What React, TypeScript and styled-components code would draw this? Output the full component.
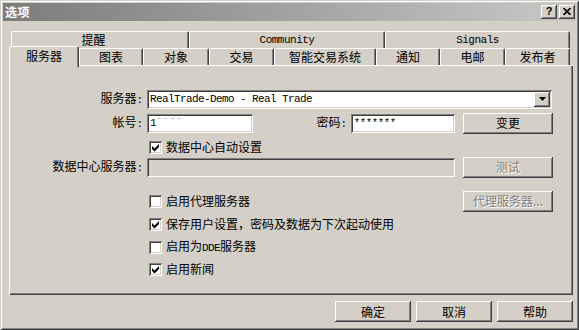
import React from "react";
import styled, { createGlobalStyle, css } from "styled-components";

const FACE = "#d4d0c8";
const SHADOW = "#808080";
const DARK = "#404040";
const HILITE = "#ffffff";
const CJK = `"Noto Sans CJK SC", "Liberation Sans", sans-serif`;
const MONO = `"Liberation Mono", "Noto Sans CJK SC", monospace`;

const raised = css`
  box-shadow: inset -1px -1px ${DARK}, inset 1px 1px ${HILITE},
    inset -2px -2px ${SHADOW}, inset 2px 2px ${FACE};
`;
const sunken = css`
  box-shadow: inset 1px 1px ${SHADOW}, inset -1px -1px ${HILITE},
    inset 2px 2px ${DARK}, inset -2px -2px ${FACE};
`;

const Global = createGlobalStyle`
  html, body { margin: 0; padding: 0; background: ${FACE}; overflow: hidden; }
  body { font-family: ${CJK}; font-size: 12px; color: #000; }
  * { box-sizing: border-box; }
`;

const Window = styled.div`
  width: 579px;
  height: 330px;
  background: ${FACE};
  padding: 3px;
  display: flex;
  flex-direction: column;
  box-shadow: inset 1px 1px ${FACE}, inset -1px -1px ${DARK},
    inset 2px 2px ${HILITE}, inset -2px -2px ${SHADOW};
`;

const TitleBar = styled.div`
  height: 18px;
  flex: none;
  display: flex;
  align-items: center;
  gap: 2px;
  padding: 0 1px 0 2px;
  background: linear-gradient(to right, #7c7c7c, #c8c8c8);
`;

const TitleText = styled.span`
  flex: 1;
  color: #fff;
  font-weight: bold;
  font-size: 12px;
  line-height: 1;
  letter-spacing: 0.5px;
`;

const CaptionButton = styled.div`
  width: 16px;
  height: 14px;
  background: ${FACE};
  ${raised};
  display: flex;
  align-items: center;
  justify-content: center;
  font-family: "Liberation Sans", sans-serif;
  font-weight: bold;
  font-size: 11px;
  line-height: 1;
  padding-bottom: 1px;
`;

const Body = styled.div`
  flex: 1;
  display: flex;
  flex-direction: column;
  padding: 10px 3px 0 6px;
`;

const TabRow = styled.div<{ $inset: number }>`
  display: flex;
  height: 17px;
  padding-left: ${(p) => p.$inset}px;
`;

const Tab = styled.div<{ $w: number; $sel?: boolean; $mono?: boolean; $pr?: number }>`
  flex: none;
  width: ${(p) => p.$w}px;
  height: ${(p) => (p.$sel ? 21 : 17)}px;
  margin-top: ${(p) => (p.$sel ? -2 : 0)}px;
  padding: 0 ${(p) => p.$pr ?? 0}px ${(p) => (p.$sel ? 2 : 0)}px 0;
  z-index: ${(p) => (p.$sel ? 3 : 1)};
  background: ${FACE};
  border-top: 1px solid ${HILITE};
  border-left: 1px solid ${HILITE};
  border-right: 1px solid ${DARK};
  border-radius: 2px 2px 0 0;
  box-shadow: inset -1px 0 ${SHADOW};
  display: flex;
  align-items: center;
  justify-content: center;
  line-height: 1;
  white-space: nowrap;
  ${(p) =>
    p.$mono
      ? css`
          font-family: ${MONO};
          font-size: 11px;
          letter-spacing: -0.5px;
        `
      : css`
          font-size: 12px;
        `}
`;

const Panel = styled.div`
  flex: 1;
  display: flex;
  flex-direction: column;
  padding-top: 24px;
  box-shadow: inset 1px 1px ${HILITE}, inset -1px -1px ${DARK},
    inset -2px -2px ${SHADOW};
`;

const Row = styled.div<{ $mt: number }>`
  display: flex;
  align-items: center;
  height: 20px;
  margin-top: ${(p) => p.$mt}px;
`;

const FieldLabel = styled.span<{ $w: number }>`
  flex: none;
  width: ${(p) => p.$w}px;
  margin-right: 4px;
  text-align: right;
  white-space: nowrap;
  line-height: 1;
`;

const Colon = styled.span`
  font-family: ${MONO};
  font-size: 11px;
`;

const TextField = styled.div<{ $w: number; $disabled?: boolean }>`
  flex: none;
  width: ${(p) => p.$w}px;
  height: 19px;
  background: ${(p) => (p.$disabled ? FACE : "#fff")};
  ${sunken};
  display: flex;
  align-items: center;
  padding: 0 3px;
  font-family: ${MONO};
  font-size: 11px;
  letter-spacing: -0.6px;
  line-height: 1;
  white-space: nowrap;
  overflow: hidden;
`;

const ComboText = styled.span`
  flex: 1;
  padding-top: 1px;
`;

const DropButton = styled.div`
  width: 16px;
  height: 15px;
  margin-right: -1px;
  background: ${FACE};
  ${raised};
  display: flex;
  align-items: center;
  justify-content: center;
`;

const Faint = styled.span`
  color: #a8a8a8;
  letter-spacing: 0;
`;

const Stars = styled.span`
  font-size: 10px;
  letter-spacing: 0;
  padding-top: 2px;
`;

const Button = styled.button<{ $w: number; $ml?: number }>`
  flex: none;
  width: ${(p) => p.$w}px;
  height: 21px;
  margin: 0 0 0 ${(p) => p.$ml ?? 0}px;
  padding: 0;
  border: none;
  background: ${FACE};
  ${raised};
  font-family: ${CJK};
  font-size: 12px;
  line-height: 1;
  color: #000;
  &:disabled {
    color: ${SHADOW};
    text-shadow: 1px 1px ${HILITE};
  }
`;

const CheckItem = styled.label<{ $w?: number }>`
  flex: none;
  display: flex;
  align-items: center;
  gap: 4px;
  margin-left: 140px;
  width: ${(p) => (p.$w ? `${p.$w}px` : "auto")};
  line-height: 1;
  white-space: nowrap;
`;

const Box = styled.span`
  flex: none;
  width: 13px;
  height: 13px;
  background: #fff;
  ${sunken};
  display: flex;
`;

const Latin = styled.span`
  font-family: ${MONO};
  font-size: 11px;
  letter-spacing: -0.6px;
`;

const Footer = styled.div`
  display: flex;
  justify-content: flex-end;
  gap: 5px;
  padding: 6px 0 5px;
`;

const Check: React.FC<{ checked?: boolean; w?: number; children: React.ReactNode }> = ({
  checked,
  w,
  children,
}) => (
  <CheckItem $w={w}>
    <Box>
      {checked && (
        <svg width="13" height="13" viewBox="0 0 13 13">
          <path d="M3 5 L5.5 7.5 L10 3 L10 6 L5.5 10.5 L3 8 Z" fill="#000" />
        </svg>
      )}
    </Box>
    <span>{children}</span>
  </CheckItem>
);

const Label: React.FC<{ w: number; text: string }> = ({ w, text }) => (
  <FieldLabel $w={w}>
    {text}
    <Colon>:</Colon>
  </FieldLabel>
);

const backTabs = [
  { label: "提醒", w: 178, pr: 13 },
  { label: "Community", w: 196, mono: true },
  { label: "Signals", w: 185, mono: true },
];

const frontTabs = [
  { label: "服务器", w: 70, sel: true },
  { label: "图表", w: 64 },
  { label: "对象", w: 66 },
  { label: "交易", w: 65 },
  { label: "智能交易系统", w: 102 },
  { label: "通知", w: 64 },
  { label: "电邮", w: 65 },
  { label: "发布者", w: 65 },
];

export default function App() {
  return (
    <>
      <Global />
      <Window>
        <TitleBar>
          <TitleText>选项</TitleText>
          <CaptionButton>?</CaptionButton>
          <CaptionButton>
            <svg width="8" height="7" viewBox="0 0 8 7">
              <path d="M0.5 0 L7.5 7 M7.5 0 L0.5 7" stroke="#000" strokeWidth="1.6" />
            </svg>
          </CaptionButton>
        </TitleBar>
        <Body>
          <TabRow $inset={2}>
            {backTabs.map((t) => (
              <Tab key={t.label} $w={t.w} $mono={t.mono} $pr={t.pr}>
                {t.label}
              </Tab>
            ))}
          </TabRow>
          <TabRow $inset={0}>
            {frontTabs.map((t) => (
              <Tab key={t.label} $w={t.w} $sel={t.sel}>
                {t.label}
              </Tab>
            ))}
          </TabRow>
          <Panel>
            <Row $mt={0}>
              <Label w={134} text="服务器" />
              <TextField $w={405}>
                <ComboText>RealTrade-Demo - Real Trade</ComboText>
                <DropButton>
                  <svg width="7" height="4" viewBox="0 0 7 4">
                    <path d="M0 0 H7 L3.5 4 Z" fill="#000" />
                  </svg>
                </DropButton>
              </TextField>
            </Row>
            <Row $mt={4}>
              <Label w={134} text="帐号" />
              <TextField $w={106}>
                1<Faint>ˉˉˉˉ</Faint>
              </TextField>
              <Label w={94} text="密码" />
              <TextField $w={104}>
                <Stars>*******</Stars>
              </TextField>
              <Button $w={90} $ml={8}>
                变更
              </Button>
            </Row>
            <Row $mt={4}>
              <Check checked>数据中心自动设置</Check>
            </Row>
            <Row $mt={0}>
              <Label w={134} text="数据中心服务器" />
              <TextField $w={308} $disabled />
              <Button $w={90} $ml={8} disabled>
                测试
              </Button>
            </Row>
            <Row $mt={14}>
              <Check w={314}>启用代理服务器</Check>
              <Button $w={90} disabled>
                代理服务器...
              </Button>
            </Row>
            <Row $mt={3}>
              <Check checked>保存用户设置，密码及数据为下次起动使用</Check>
            </Row>
            <Row $mt={3}>
              <Check>
                启用为<Latin>DDE</Latin>服务器
              </Check>
            </Row>
            <Row $mt={2}>
              <Check checked>启用新闻</Check>
            </Row>
          </Panel>
          <Footer>
            <Button $w={76}>确定</Button>
            <Button $w={76}>取消</Button>
            <Button $w={76}>帮助</Button>
          </Footer>
        </Body>
      </Window>
    </>
  );
}
